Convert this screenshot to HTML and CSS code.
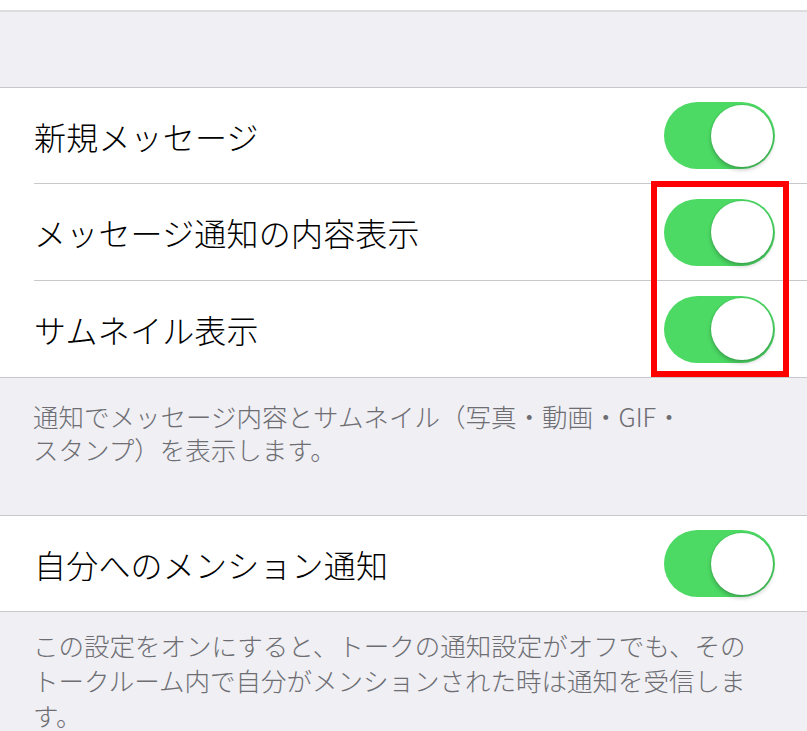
FILE: index.html
```html
<!DOCTYPE html>
<html lang="ja">
<head>
<meta charset="utf-8">
<link rel="stylesheet" href="styles.css">
</head>
<body>
<div class="page">
  <div class="top-white"></div>
  <div class="spacer"></div>
  <div class="group">
    <div class="row"><span class="label">新規メッセージ</span><span class="switch"><span class="knob"></span></span></div>
    <div class="row"><span class="label">メッセージ通知の内容表示</span><span class="switch"><span class="knob"></span></span></div>
    <div class="row"><span class="label">サムネイル表示</span><span class="switch"><span class="knob"></span></span></div>
  </div>
  <div class="footer footer-a">通知でメッセージ内容とサムネイル（写真・動画・GIF・<br>スタンプ）を表示します。</div>
  <div class="group">
    <div class="row"><span class="label">自分へのメンション通知</span><span class="switch"><span class="knob"></span></span></div>
  </div>
  <div class="footer footer-b">この設定をオンにすると、トークの通知設定がオフでも、その<br>トークルーム内で自分がメンションされた時は通知を受信しま<br>す。</div>
  <div class="highlight"></div>
</div>
</body>
</html>
```
FILE: styles.css
```css
html, body {
  margin: 0;
  padding: 0;
  background: #efeff4;
}
.page {
  position: relative;
  width: 807px;
  height: 731px;
  overflow: hidden;
  background: #efeff4;
  font-family: "Noto Sans CJK JP", "Noto Sans", sans-serif;
}
.top-white {
  height: 10px;
  background: #ffffff;
}
.spacer {
  height: 75px;
  border-top: 2px solid #dcdbe0;
  border-bottom: 1px solid #c8c7cc;
  background: #efeff4;
}
.group {
  background: #ffffff;
  border-bottom: 1px solid #c8c7cc;
}
.footer + .group {
  border-top: 1px solid #c8c7cc;
}
.row {
  display: flex;
  align-items: center;
  justify-content: space-between;
  height: 97px;
  margin-left: 34px;
  padding-right: 32px;
  border-bottom: 1px solid #c8c7cc;
  box-sizing: border-box;
}
.row:first-child {
  height: 96px;
}
.row:last-child {
  border-bottom: none;
  height: 96px;
}
.group .row:only-child {
  height: 95px;
}
.label {
  font-size: 32px;
  font-weight: 300;
  color: #000000;
  line-height: 1;
  letter-spacing: 0.2px;
}
.switch {
  display: flex;
  justify-content: flex-end;
  align-items: center;
  width: 111px;
  height: 67px;
  border-radius: 34px;
  background: #4cd964;
  padding: 0 2px;
  box-sizing: border-box;
}
.knob {
  width: 62px;
  height: 62px;
  border-radius: 50%;
  background: #ffffff;
  box-shadow: 0 3px 4px rgba(0, 0, 0, 0.22), 0 0 0 1px rgba(0, 0, 0, 0.06);
}
.footer {
  font-size: 25.5px;
  font-weight: 300;
  color: #6d6d72;
  padding: 0 20px 0 33px;
  line-height: 33px;
}
.footer-a {
  height: 137px;
  padding-top: 21px;
  box-sizing: border-box;
}
.footer-b {
  padding-top: 15px;
  line-height: 35px;
}
.highlight {
  position: absolute;
  left: 651px;
  top: 181px;
  width: 138px;
  height: 196px;
  border: 6px solid #ff0000;
  box-sizing: border-box;
}
```
